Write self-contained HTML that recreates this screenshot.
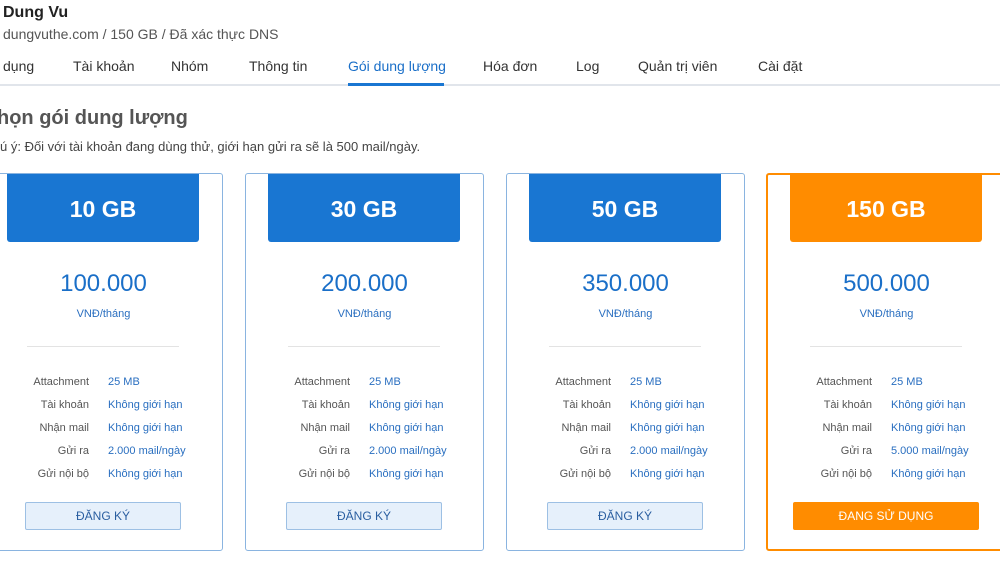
<!DOCTYPE html>
<html><head><meta charset="utf-8"><style>
*{margin:0;padding:0;box-sizing:border-box}
body{width:1000px;height:562px;overflow:hidden;background:#fff;font-family:"Liberation Sans",sans-serif;position:relative;color:#333}
.a{position:absolute;white-space:nowrap}
.tab{position:absolute;top:58px;font-size:14px;color:#333}
.card{position:absolute;top:173px;width:239px;height:378px;border:1px solid #8ab4e0;border-radius:3px;background:#fff}
.hd{position:absolute;left:22px;top:0;width:192px;height:68px;background:#1976d2;border-radius:0 0 3px 3px;color:#fff;font-weight:bold;font-size:23px;text-align:center;line-height:70px}
.pr{position:absolute;left:0;width:100%;top:96px;text-align:center;font-size:24px;color:#1a6fc8}
.un{position:absolute;left:0;width:100%;top:134px;text-align:center;font-size:11px;color:#2a6fc0}
.dv{position:absolute;left:42px;width:152px;top:172px;border-top:1px solid #e3e3e3}
.row{position:absolute;left:0;font-size:11px}
.row .l{position:absolute;right:-104px;width:100px;text-align:right;color:#555}
.row .v{position:absolute;left:123px;color:#2a6fc0;white-space:nowrap}
.btn{position:absolute;left:40px;top:328px;width:156px;height:28px;border:1px solid #9dc0e4;background:#e6f0fb;color:#2a5ea0;font-size:12px;text-align:center;line-height:26px;border-radius:2px}
</style></head><body>
<div class="a" style="left:3px;top:4px;font-size:16px;font-weight:bold;color:#222">Dung Vu</div>
<div class="a" style="left:3px;top:26px;font-size:14px;color:#555">dungvuthe.com / 150 GB / Đã xác thực DNS</div>
<div class="tab" style="left:3px">dụng</div>
<div class="tab" style="left:73px">Tài khoản</div>
<div class="tab" style="left:171px">Nhóm</div>
<div class="tab" style="left:249px">Thông tin</div>
<div class="tab" style="left:348px;color:#1a6fc8">Gói dung lượng</div>
<div class="tab" style="left:483px">Hóa đơn</div>
<div class="tab" style="left:576px">Log</div>
<div class="tab" style="left:638px">Quản trị viên</div>
<div class="tab" style="left:758px">Cài đặt</div>
<div class="a" style="left:0;top:84px;width:1000px;height:2px;background:#e1e5eb"></div>
<div class="a" style="left:348px;top:83px;width:96px;height:3px;background:#1976d2"></div>
<div class="a" style="left:-3px;top:107px;font-size:20px;font-weight:bold;color:#555">họn gói dung lượng</div>
<div class="a" style="left:0;top:139px;font-size:13px;color:#444">ú ý: Đối với tài khoản đang dùng thử, giới hạn gửi ra sẽ là 500 mail/ngày.</div>

<div class="card" style="left:-16px">
<div class="hd">10 GB</div><div class="pr">100.000</div><div class="un">VNĐ/tháng</div><div class="dv"></div>
<div class="row" style="top:202px"><span class="l">Attachment</span><span class="v">25 MB</span></div>
<div class="row" style="top:225px"><span class="l">Tài khoản</span><span class="v">Không giới hạn</span></div>
<div class="row" style="top:248px"><span class="l">Nhận mail</span><span class="v">Không giới hạn</span></div>
<div class="row" style="top:271px"><span class="l">Gửi ra</span><span class="v">2.000 mail/ngày</span></div>
<div class="row" style="top:294px"><span class="l">Gửi nội bộ</span><span class="v">Không giới hạn</span></div>
<div class="btn">ĐĂNG KÝ</div></div>

<div class="card" style="left:245px">
<div class="hd">30 GB</div><div class="pr">200.000</div><div class="un">VNĐ/tháng</div><div class="dv"></div>
<div class="row" style="top:202px"><span class="l">Attachment</span><span class="v">25 MB</span></div>
<div class="row" style="top:225px"><span class="l">Tài khoản</span><span class="v">Không giới hạn</span></div>
<div class="row" style="top:248px"><span class="l">Nhận mail</span><span class="v">Không giới hạn</span></div>
<div class="row" style="top:271px"><span class="l">Gửi ra</span><span class="v">2.000 mail/ngày</span></div>
<div class="row" style="top:294px"><span class="l">Gửi nội bộ</span><span class="v">Không giới hạn</span></div>
<div class="btn">ĐĂNG KÝ</div></div>

<div class="card" style="left:506px">
<div class="hd">50 GB</div><div class="pr">350.000</div><div class="un">VNĐ/tháng</div><div class="dv"></div>
<div class="row" style="top:202px"><span class="l">Attachment</span><span class="v">25 MB</span></div>
<div class="row" style="top:225px"><span class="l">Tài khoản</span><span class="v">Không giới hạn</span></div>
<div class="row" style="top:248px"><span class="l">Nhận mail</span><span class="v">Không giới hạn</span></div>
<div class="row" style="top:271px"><span class="l">Gửi ra</span><span class="v">2.000 mail/ngày</span></div>
<div class="row" style="top:294px"><span class="l">Gửi nội bộ</span><span class="v">Không giới hạn</span></div>
<div class="btn">ĐĂNG KÝ</div></div>

<div class="card" style="left:766px;border:2px solid #ff8c00;width:241px">
<div class="hd" style="background:#ff8c00;left:22px;top:-1px">150 GB</div><div class="pr" style="top:95px">500.000</div><div class="un" style="top:133px">VNĐ/tháng</div><div class="dv" style="top:171px"></div>
<div class="row" style="top:201px"><span class="l">Attachment</span><span class="v">25 MB</span></div>
<div class="row" style="top:224px"><span class="l">Tài khoản</span><span class="v">Không giới hạn</span></div>
<div class="row" style="top:247px"><span class="l">Nhận mail</span><span class="v">Không giới hạn</span></div>
<div class="row" style="top:270px"><span class="l">Gửi ra</span><span class="v">5.000 mail/ngày</span></div>
<div class="row" style="top:293px"><span class="l">Gửi nội bộ</span><span class="v">Không giới hạn</span></div>
<div class="btn" style="left:25px;width:186px;top:327px;background:#ff8c00;border-color:#ff8c00;color:#fff">ĐANG SỬ DỤNG</div></div>
</body></html>
